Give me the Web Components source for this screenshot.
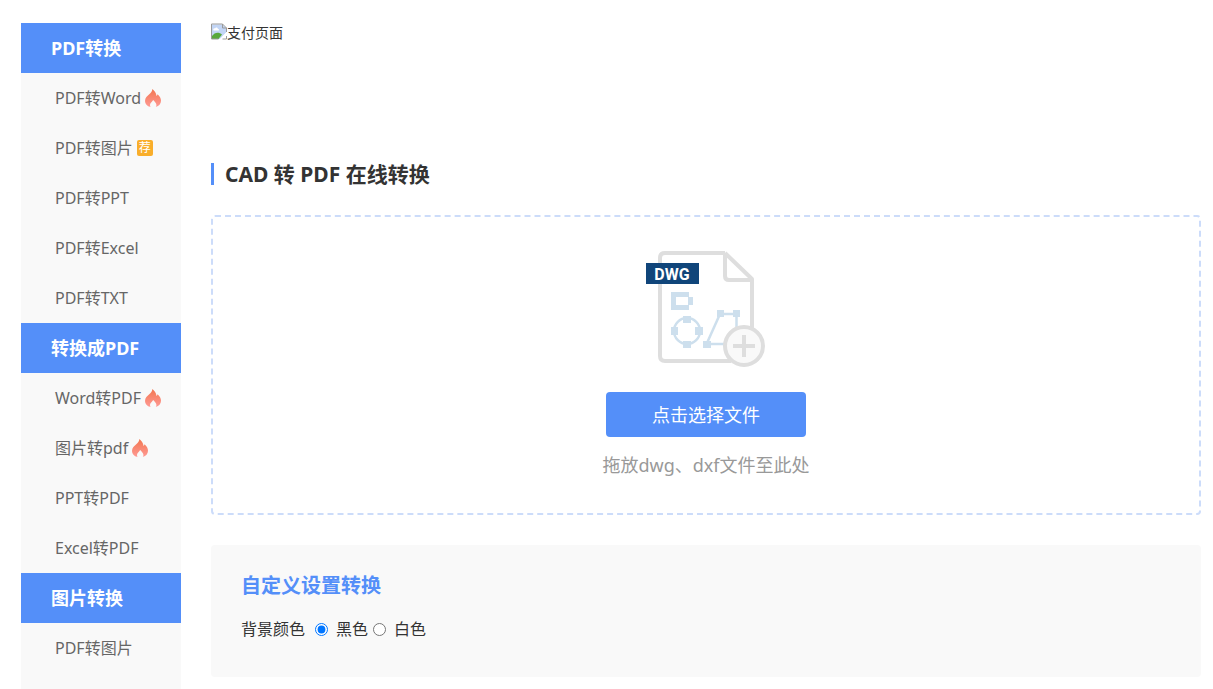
<!DOCTYPE html>
<html lang="zh-CN">
<head>
<meta charset="utf-8">
<title>CAD 转 PDF 在线转换</title>
<style>
  body {
    margin: 0;
    background: #fff;
    color: #333;
    font: 16px/24px "Noto Sans", "Noto Sans CJK SC", sans-serif;
  }
</style>
</head>
<body>
<pdf-layout>
  <pdf-menu slot="side"></pdf-menu>
  <pay-banner label="支付页面"></pay-banner>
  <page-title>CAD 转 PDF 在线转换</page-title>
  <upload-zone button="点击选择文件">拖放dwg、dxf文件至此处</upload-zone>
  <convert-settings heading="自定义设置转换"></convert-settings>
</pdf-layout>

<script>
const menuGroups = [
  ['PDF转换', [['PDF转Word', 'hot'], ['PDF转图片', 'rec'], ['PDF转PPT'], ['PDF转Excel'], ['PDF转TXT']]],
  ['转换成PDF', [['Word转PDF', 'hot'], ['图片转pdf', 'hot'], ['PPT转PDF'], ['Excel转PDF']]],
  ['图片转换', [['PDF转图片']]]
];

function render(element, html) {
  element.attachShadow({ mode: 'open' }).innerHTML = html;
}

class PdfLayout extends HTMLElement {
  connectedCallback() {
    render(this, `
      <style>
        :host { display: flex; gap: 30px; box-sizing: border-box; min-height: 100vh; padding: 23px 12px 0 21px; }
        aside { flex: 0 0 160px; background: #f9f9f9; }
        main { flex: 1; min-width: 0; padding-bottom: 12px; }
      </style>
      <aside><slot name="side"></slot></aside>
      <main><slot></slot></main>`);
  }
}

class MenuBadge extends HTMLElement {
  connectedCallback() {
    const hot = this.getAttribute('type') === 'hot';
    render(this, `
      <style>
        :host { display: flex; margin-left: 4px; }
        svg { display: block; }
        span { width: 16px; height: 16px; border-radius: 2px; background: #f9ae2b; color: #fff; font-size: 12px; line-height: 16px; text-align: center; }
      </style>
      ${hot ? `<svg width="16" height="18" viewBox="0 0 16 18" aria-hidden="true">
        <defs><linearGradient id="flame" x1="0" y1="0" x2="0" y2="1"><stop offset="0" stop-color="#f27650"/><stop offset="1" stop-color="#ff9a94"/></linearGradient></defs>
        <path fill="url(#flame)" d="M7.4 0C8.9 1.2 11.4 3.7 11.5 7c.6-.4.9-1 1-1.8C14.700 6.900 16 9.200 16 11.700c0 3-2 5.400-5.200 6.200.5-.6.7-1.300.6-2.200-.2-1.700-1.700-2.700-2.600-4.200-.4-.2-.8-.2-1 .1C7 13.200 5.200 14 5 15.800c-.1.800.2 1.500.6 2.100C2 17.200 0 14.800 0 11.900c0-3 2.300-5 4-6.400C5.900 4 7.300 2.300 7.400 0z"/>
      </svg>` : '<span>荐</span>'}`);
  }
}

class PdfMenu extends HTMLElement {
  connectedCallback() {
    const groups = menuGroups.map(([title, items]) => `
      <h2>${title}</h2>
      <ul>${items.map(([label, badge]) => `<li><a href="#">${label}${badge ? `<menu-badge type="${badge}"></menu-badge>` : ''}</a></li>`).join('')}</ul>`).join('');
    render(this, `
      <style>
        :host { display: block; line-height: 50px; }
        h2 { margin: 0; padding-left: 30px; background: #548ff9; color: #fff; font-size: 18px; font-weight: 700; }
        ul { margin: 0; padding: 0; list-style: none; }
        a { display: flex; align-items: center; height: 50px; padding-left: 34px; color: #666; text-decoration: none; white-space: nowrap; }
        a:hover { color: #548ff9; }
      </style>
      <nav>${groups}</nav>`);
  }
}

class PayBanner extends HTMLElement {
  connectedCallback() {
    const label = this.getAttribute('label');
    render(this, `
      <style>
        :host { display: block; height: 140px; font-size: 14px; line-height: 20px; }
        div { display: flex; align-items: flex-start; }
        svg { flex: none; }
      </style>
      <div>
        <svg width="16" height="17" viewBox="0 0 16 17" aria-hidden="true">
          <path fill="#c2d5f5" d="M1 1.500h10.500L15 5v4.500L9 16H1z"/>
          <path fill="#fff" d="M2.500 7.500c-.8-1.500.5-2.500 1.500-2C4.500 4 6.700 4.200 6.800 5.700c1.200 0 1.500 1.200.9 1.800z"/>
          <path fill="#58a83c" d="M1 16v-3c2.500-3.500 6.500-4.500 10-1.500L7.500 16z"/>
          <path fill="#fff" d="M8 17l8-8v3l-5 5z"/>
          <path fill="none" stroke="#9a9a9a" d="M7.500 16H.5V1h11l4 4v4M11.500 1v4h4M11.500 16h4v-3"/>
        </svg>
        <span>${label}</span>
      </div>`);
  }
}

class PageTitle extends HTMLElement {
  connectedCallback() {
    render(this, `
      <style>
        :host { display: block; margin-bottom: 30px; }
        h1 { margin: 0; padding-left: 11px; border-left: 3px solid #548ff9; font-size: 21px; line-height: 22px; font-weight: 700; }
      </style>
      <h1><slot></slot></h1>`);
  }
}

class DwgIcon extends HTMLElement {
  connectedCallback() {
    render(this, `
      <style>
        :host { display: block; }
        svg { display: block; }
        text { font: 700 16px Roboto, sans-serif; }
      </style>
      <svg width="120" height="120" viewBox="0 0 120 120" aria-hidden="true">
        <g fill="none" stroke="#dedede" stroke-width="4" stroke-linejoin="round">
          <path d="M79 3H19q-5 0-5 5v98q0 5 5 5h66M79 3l27 26v52M79 3v23q0 4 4 4h23"/>
        </g>
        <path fill="#10457a" d="M0 13h53v21H0z"/>
        <text x="26" y="30" fill="#fff" text-anchor="middle">DWG</text>
        <g fill="#cddfed">
          <path fill-rule="evenodd" d="M25 42h18v5h4v8h-4v5H25zm5 5v8h12v-8z"/>
          <path d="M37 66h8v7h-8zM37 91h8v7h-8zM25 77h7v8h-7zM49 77h8v8h-8zM71 60h7v7h-7zM87 60h7v7h-7zM57 91h8v7h-8z"/>
        </g>
        <g fill="none" stroke="#cddfed" stroke-width="2.500">
          <circle cx="41" cy="81" r="13"/>
          <path d="M61 93 74 64h16.500v20M61 94h20"/>
        </g>
        <circle cx="98" cy="96" r="19" fill="#f9f9f9" stroke="#dedede" stroke-width="4"/>
        <path stroke="#dedede" stroke-width="4" d="M87 96h22M98 85v22"/>
      </svg>`);
  }
}

class UploadZone extends HTMLElement {
  connectedCallback() {
    render(this, `
      <style>
        :host { display: flex; flex-direction: column; align-items: center; box-sizing: border-box; min-height: 300px; padding: 33px 20px; border: 2px dashed #ccdcfa; border-radius: 4px; }
        button { width: 200px; height: 45px; margin: 22px 0 16px; padding: 0; border: 0; border-radius: 4px; background: #548ff9; color: #fff; font: inherit; font-size: 18px; cursor: pointer; }
        p { margin: 0; color: #999; font-size: 18px; }
      </style>
      <dwg-icon></dwg-icon>
      <button type="button">${this.getAttribute('button')}</button>
      <p><slot></slot></p>
      <input type="file" accept=".dwg,.dxf" aria-label="${this.getAttribute('button')}" hidden>`);
    const input = this.shadowRoot.querySelector('input');
    this.shadowRoot.querySelector('button').addEventListener('click', () => input.click());
  }
}

class ConvertSettings extends HTMLElement {
  connectedCallback() {
    render(this, `
      <style>
        :host { display: block; box-sizing: border-box; min-height: 132px; margin-top: 30px; padding: 26px 30px; border-radius: 4px; background: #f9f9f9; }
        h2 { margin: 0 0 16px; color: #548ff9; font-size: 20px; line-height: 30px; font-weight: 700; }
        div, label { display: flex; align-items: center; }
        input { width: 13px; height: 13px; margin: 0 8px 0 0; }
        label { margin-right: 5px; }
        span { margin-right: 10px; }
      </style>
      <h2>${this.getAttribute('heading')}</h2>
      <div role="radiogroup" aria-labelledby="color">
        <span id="color">背景颜色</span>
        <label><input type="radio" name="color" value="black" checked>黑色</label>
        <label><input type="radio" name="color" value="white">白色</label>
      </div>`);
  }
}

customElements.define('pdf-layout', PdfLayout);
customElements.define('menu-badge', MenuBadge);
customElements.define('pdf-menu', PdfMenu);
customElements.define('pay-banner', PayBanner);
customElements.define('page-title', PageTitle);
customElements.define('dwg-icon', DwgIcon);
customElements.define('upload-zone', UploadZone);
customElements.define('convert-settings', ConvertSettings);
</script>
</body>
</html>
